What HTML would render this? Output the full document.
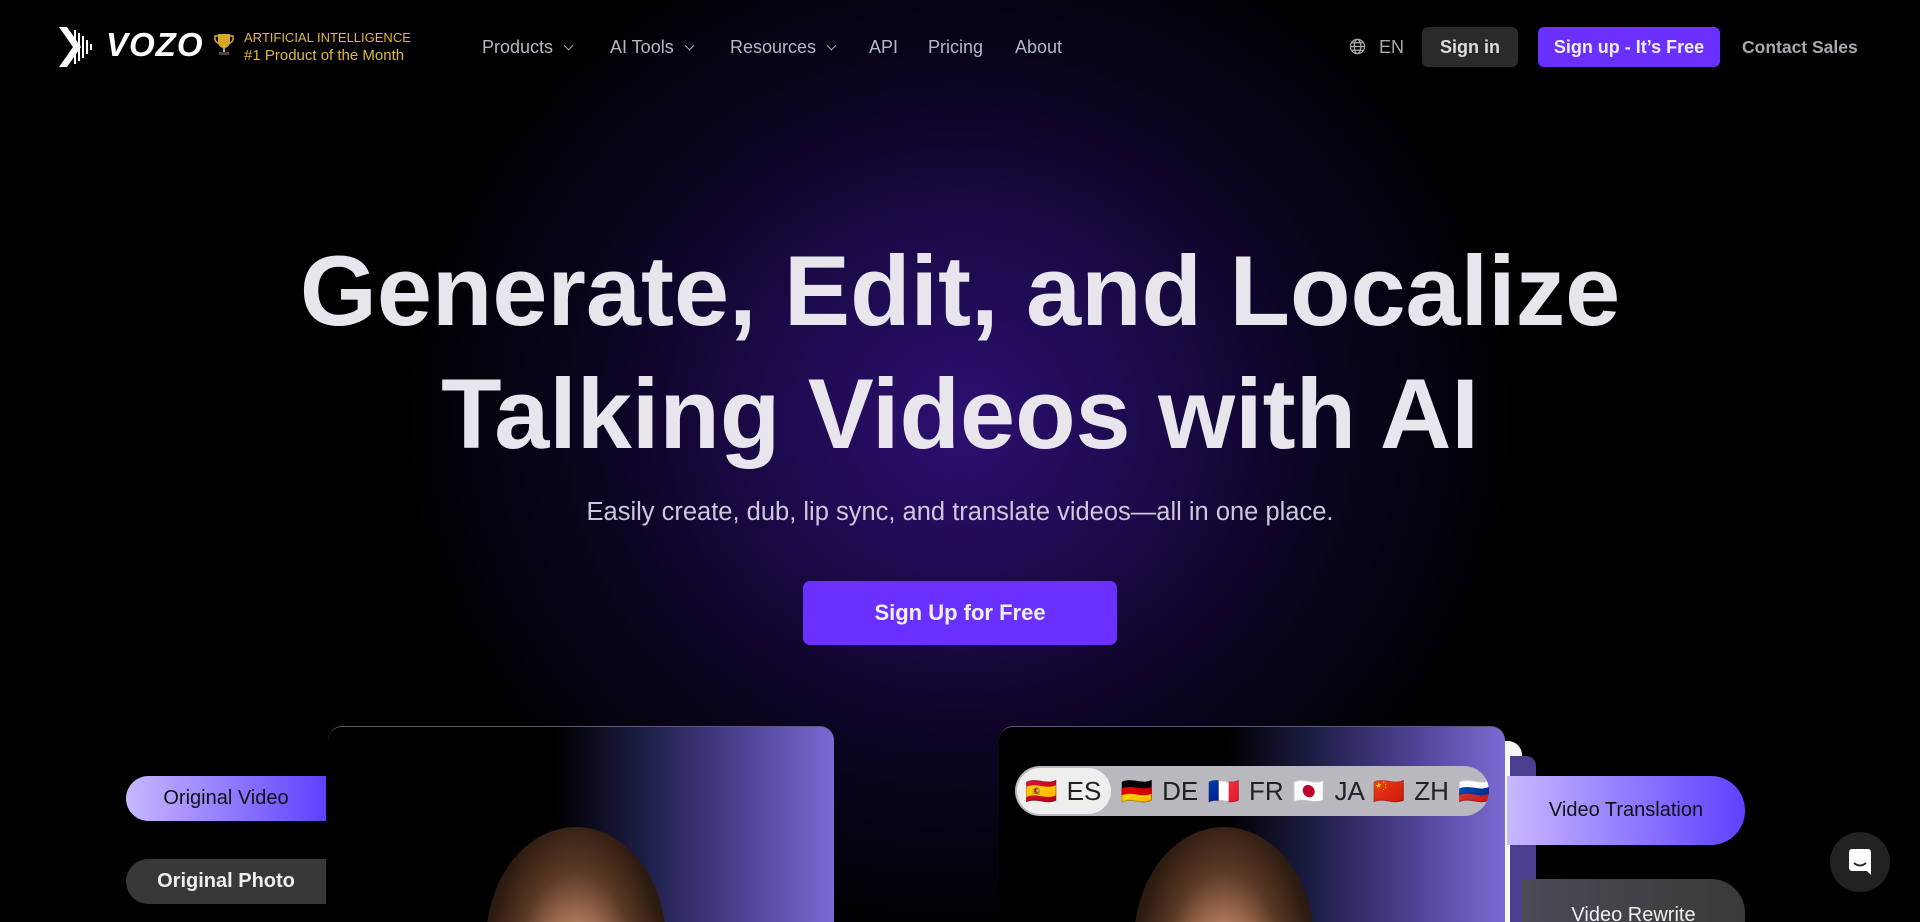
<!DOCTYPE html>
<html><head><meta charset="utf-8"><style>
*{margin:0;padding:0;box-sizing:border-box}
html,body{width:1920px;height:922px;overflow:hidden;background:#000;font-family:"Liberation Sans",sans-serif;position:relative}
.bg{position:absolute;inset:0;background:radial-gradient(ellipse 560px 520px at 960px 420px,#2c1072 0%,#1c0a4a 35%,#0b0420 65%,#000 100%)}
.abs{position:absolute}
.nav{color:#b4b8c4;font-size:18px;top:37px}
.chev{display:inline-block;width:7px;height:7px;border-right:1.5px solid #aaa;border-bottom:1.5px solid #aaa;transform:rotate(45deg);margin-left:12px;position:relative;top:-4px}
h1{position:absolute;left:0;width:1920px;text-align:center;color:#e8e6ec;font-size:99px;font-weight:bold;line-height:123px;top:229px}
.pill{position:absolute;border-radius:28px 0 0 28px;font-size:20px;display:flex;align-items:center;justify-content:center}
.card{position:absolute;border-radius:14px 14px 0 0;border-top:1.5px solid #555a78;overflow:hidden;background:linear-gradient(90deg,#000 0%,#000 45%,#1c1d45 62%,#4d4394 82%,#7c6ad4 100%)}
.face{position:absolute;width:180px;height:230px;border-radius:50% 50% 45% 45%;background:radial-gradient(ellipse at 50% 85%,#d0a080 0%,#b07a5c 35%,#5a3824 55%,#2e1c12 75%,#1e120c 100%)}
</style></head><body>
<div class="bg"></div>
<svg class="abs" style="left:59px;top:27px" width="36" height="40" viewBox="0 0 36 40"><path d="M0 0 L14 20 L0 40 L8 40 L22 20 L8 0Z" fill="#fff"/><path d="M16 3v34M20 6v28M24 9v22M28 13v14M32 17v6" stroke="#fff" stroke-width="2"/></svg>
<div class="abs" style="left:106px;top:26px;color:#fff;font-size:33px;font-weight:bold;font-style:italic;letter-spacing:1px">VOZO</div>
<svg class="abs" style="left:214px;top:33px" width="20" height="26" viewBox="0 0 20 26"><path d="M4 1h12v8a6 6 0 0 1-12 0z" fill="#d4a82a"/><path d="M4 3H1v3a4 4 0 0 0 4 4M16 3h3v3a4 4 0 0 1-4 4" stroke="#d4a82a" fill="none" stroke-width="1.5"/><rect x="9" y="14" width="2" height="5" fill="#d4a82a"/><rect x="5" y="19" width="10" height="3" fill="#444"/></svg>
<div class="abs" style="left:244px;top:30px;color:#e0b83a;font-size:13px">ARTIFICIAL INTELLIGENCE</div>
<div class="abs" style="left:244px;top:47px;color:#e0b83a;font-size:15px">#1 Product of the Month</div>
<div class="abs nav" style="left:482px">Products<span class="chev"></span></div>
<div class="abs nav" style="left:610px">AI Tools<span class="chev"></span></div>
<div class="abs nav" style="left:730px">Resources<span class="chev"></span></div>
<div class="abs nav" style="left:869px">API</div>
<div class="abs nav" style="left:928px">Pricing</div>
<div class="abs nav" style="left:1015px">About</div>
<svg class="abs" style="left:1349px;top:38px" width="17" height="17" viewBox="0 0 18 18" fill="none" stroke="#aaa" stroke-width="1.3"><circle cx="9" cy="9" r="7.5"/><ellipse cx="9" cy="9" rx="3.5" ry="7.5"/><path d="M1.5 9h15M3 5h12M3 13h12"/></svg>
<div class="abs nav" style="left:1379px;color:#aaa">EN</div>
<div class="abs" style="left:1422px;top:27px;width:96px;height:40px;border-radius:6px;background:#2a2a2c;color:#ddd;font-size:18px;font-weight:bold;display:flex;align-items:center;justify-content:center">Sign in</div>
<div class="abs" style="left:1538px;top:27px;width:182px;height:40px;border-radius:6px;background:#6a30ff;color:#eee;font-size:18px;font-weight:bold;display:flex;align-items:center;justify-content:center">Sign up - It’s Free</div>
<div class="abs nav" style="left:1742px;font-weight:bold;color:#a8a8ae;font-size:17.5px">Contact Sales</div>

<h1>Generate, Edit, and Localize<br>Talking Videos with AI</h1>
<div class="abs" style="left:0;width:1920px;text-align:center;top:498px;color:#cfc8dc;font-size:25.5px">Easily create, dub, lip sync, and translate videos—all in one place.</div>
<div class="abs" style="left:803px;top:581px;width:314px;height:64px;border-radius:7px;background:#6a30ff;color:#f0f0f0;font-size:22px;font-weight:bold;display:flex;align-items:center;justify-content:center">Sign Up for Free</div>

<div class="card" style="left:328px;top:726px;width:506px;height:196px"><div class="face" style="left:158px;top:100px"></div></div>
<div class="pill" style="left:126px;top:776px;width:200px;height:45px;background:linear-gradient(90deg,#c8b8ff,#6040ff);color:#111">Original Video</div>
<div class="pill" style="left:126px;top:859px;width:200px;height:45px;background:#383838;color:#eee;font-weight:bold">Original Photo</div>

<div class="abs" style="left:1490px;top:741px;width:32px;height:181px;border-radius:0 14px 0 0;background:#f4f8f4"></div>
<div class="abs" style="left:1510px;top:756px;width:26px;height:166px;border-radius:0 10px 0 0;background:#4a3e90"></div>
<div class="card" style="left:999px;top:726px;width:506px;height:196px"><div class="face" style="left:135px;top:100px"></div>
<div class="abs" style="left:16px;top:39px;width:474px;height:50px;border-radius:25px;background:#b8b8be;font-size:26px;color:#222;display:flex;align-items:center;white-space:nowrap;word-spacing:2px;overflow:hidden">
<span style="background:#eee;border-radius:25px;height:46px;margin-left:2px;padding:0 10px 0 8px;display:flex;align-items:center">🇪🇸 ES</span>&nbsp;🇩🇪 DE 🇫🇷 FR 🇯🇵 JA 🇨🇳 ZH 🇷🇺</div></div>
<div class="pill" style="left:1507px;top:776px;width:238px;height:69px;border-radius:0 34px 34px 0;background:linear-gradient(90deg,#c8b8ff,#6040ff);color:#111">Video Translation</div>
<div class="pill" style="left:1522px;top:879px;width:223px;height:43px;border-radius:0 34px 0 0;background:linear-gradient(90deg,#4a4a55,#3a3a3a);color:#eee;padding-top:30px;overflow:hidden">Video Rewrite</div>
<div class="abs" style="left:1830px;top:832px;width:60px;height:60px;border-radius:50%;background:#222;display:flex;align-items:center;justify-content:center"><svg width="22" height="26" viewBox="0 0 22 26"><path d="M3 0h16a3 3 0 0 1 3 3v23l-4-4H3a3 3 0 0 1-3-3V3a3 3 0 0 1 3-3z" fill="#fff"/><path d="M5 14q6 5 12 0" stroke="#222" stroke-width="1.8" fill="none"/></svg></div>
</body></html>
